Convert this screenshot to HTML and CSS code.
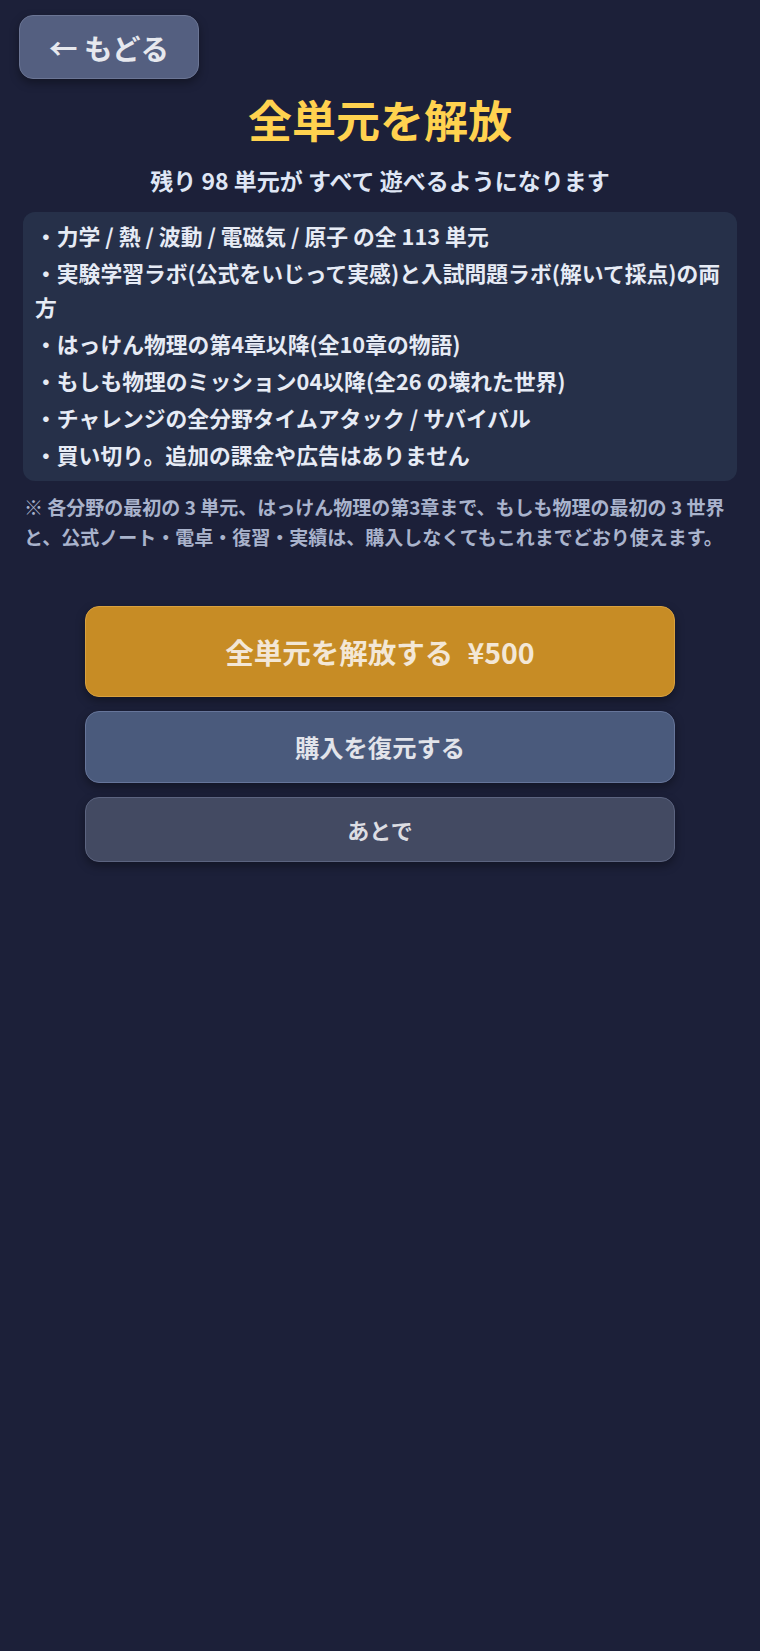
FILE: index.html
```html
<!DOCTYPE html>
<html lang="ja">
<head>
    <meta charset="UTF-8">
    <meta name="viewport" content="width=device-width, initial-scale=1.0">
    <title>全単元を解放</title>
    <link rel="stylesheet" href="styles.css">
</head>
<body>
    <div class="screen">
        <div class="topbar">
            <button class="back-btn">← もどる</button>
        </div>

        <h1 class="title">全単元を解放</h1>
        <p class="subtitle">残り 98 単元が すべて 遊べるようになります</p>

        <ul class="features">
            <li>・力学 / 熱 / 波動 / 電磁気 / 原子 の全 113 単元</li>
            <li>・実験学習ラボ(公式をいじって実感)と入試問題ラボ(解いて採点)の両方</li>
            <li>・はっけん物理の第4章以降(全10章の物語)</li>
            <li>・もしも物理のミッション04以降(全26 の壊れた世界)</li>
            <li>・チャレンジの全分野タイムアタック / サバイバル</li>
            <li>・買い切り。追加の課金や広告はありません</li>
        </ul>

        <p class="note">※ 各分野の最初の 3 単元、はっけん物理の第3章まで、もしも物理の最初の 3 世界と、公式ノート・電卓・復習・実績は、購入しなくてもこれまでどおり使えます。</p>

        <div class="actions">
            <button class="btn btn-buy">全単元を解放する<span class="price">¥500</span></button>
            <button class="btn btn-restore">購入を復元する</button>
            <button class="btn btn-later">あとで</button>
        </div>
    </div>
</body>
</html>
```

FILE: styles.css
```css
* {
    margin: 0;
    padding: 0;
    box-sizing: border-box;
}

body {
    font-family: "Noto Sans CJK JP", "Noto Sans", sans-serif;
    background: #1c2039;
    color: #e3e8f4;
    min-height: 100vh;
}

.screen {
    padding: 15px 23px 40px;
}

.topbar {
    display: flex;
    margin-left: -4px;
}

.back-btn {
    font-family: inherit;
    font-size: 28.5px;
    font-weight: bold;
    color: #e6e8ee;
    background: #545f80;
    border: 1px solid #6b7594;
    border-radius: 14px;
    width: 180px;
    height: 64px;
    box-shadow: 0 4px 10px rgba(0, 0, 0, 0.35);
    cursor: pointer;
}

.title {
    font-size: 44px;
    font-weight: bold;
    color: #ffd24f;
    text-align: center;
    line-height: 1.2;
    margin-top: 14px;
}

.subtitle {
    font-size: 23px;
    font-weight: bold;
    text-align: center;
    color: #dfe6f5;
    margin-top: 18px;
    line-height: 1.4;
}

.features {
    list-style: none;
    background: #263049;
    border-radius: 12px;
    margin-top: 16px;
    padding: 4px 10px 6px 12px;
}

.features li {
    font-size: 21.8px;
    font-weight: bold;
    line-height: 34px;
    color: #e6ebf5;
    margin: 3px 0;
}

.note {
    font-size: 19px;
    font-weight: bold;
    line-height: 30px;
    color: #a9b3cc;
    margin-top: 11px;
    padding-left: 1px;
}

.actions {
    display: flex;
    flex-direction: column;
    align-items: center;
    gap: 14px;
    margin-top: 54px;
}

.btn {
    font-family: inherit;
    font-weight: bold;
    width: 590px;
    border-radius: 14px;
    cursor: pointer;
    box-shadow: 0 4px 10px rgba(0, 0, 0, 0.35);
}

.btn-buy {
    height: 91px;
    font-size: 28.5px;
    color: #f3e7d6;
    background: #c78c25;
    border: 1px solid #d9a13e;
}

.price {
    margin-left: 14px;
}

.btn-restore {
    height: 72px;
    font-size: 24.3px;
    color: #e2e4ea;
    background: #4a5a7c;
    border: 1px solid #66759a;
}

.btn-later {
    height: 65px;
    font-size: 22px;
    color: #dcdde2;
    background: #434a62;
    border: 1px solid #5c6480;
}
```
